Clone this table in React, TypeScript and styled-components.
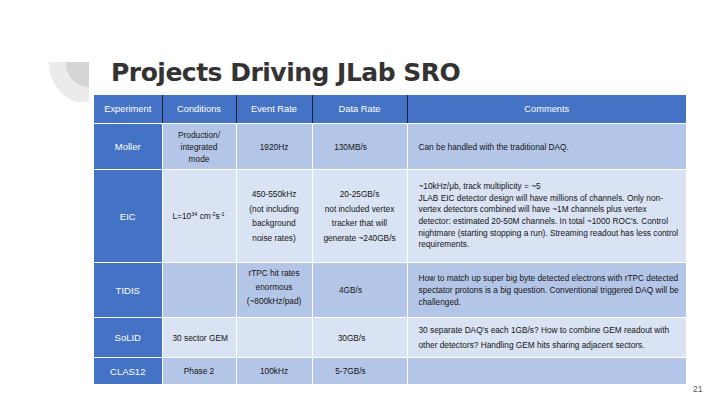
import {FC, ReactNode} from "react";
import styled, {createGlobalStyle} from "styled-components";

const GlobalStyle = createGlobalStyle`
  html, body {
    margin: 0;
    padding: 0;
    background: #fff;
  }
`

type Row = {
  name: string
  height: number
  shade: "mid" | "light"
  cells: {content: ReactNode, align?: "left" | "center", valign?: "top" | "middle", lh?: number, pl?: number, pr?: number, pt?: number}[]
}

// built lazily so the styled Sup below exists when the JSX is created
const buildRows = (): Row[] => [
  {
    name: "Moller",
    height: 46,
    shade: "mid",
    cells: [
      {content: <>Production/<br/>integrated<br/>mode</>, lh: 12},
      {content: "1920Hz"},
      {content: "130MB/s", pr: 22},
      {content: "Can be handled with the traditional DAQ.", align: "left", pl: 11},
    ],
  },
  {
    name: "EIC",
    height: 93,
    shade: "light",
    cells: [
      {content: <>L=10<Sup>34</Sup> cm<Sup>-2</Sup>s<Sup>-1</Sup></>, align: "left", pl: 10},
      {content: <>450-550kHz<br/>(not including<br/>background<br/>noise rates)</>, lh: 14.5},
      {content: <>20-25GB/s<br/>not included vertex<br/>tracker that will<br/>generate ~240GB/s</>, lh: 14.5},
      {
        content: <>~10kHz/μb, track multiplicity = ~5<br/>JLAB EIC detector design will have millions of channels. Only non-<br/>vertex detectors combined will have ~1M channels plus vertex<br/>detector: estimated 20-50M channels. In total ~1000 ROC's. Control<br/>nightmare (starting stopping a run). Streaming readout has less control<br/>requirements.</>,
        align: "left", pl: 11, lh: 11.7,
      },
    ],
  },
  {
    name: "TIDIS",
    height: 55,
    shade: "mid",
    cells: [
      {content: ""},
      {content: <>rTPC hit rates<br/>enormous<br/>(~800kHz/pad)</>, valign: "top", lh: 14, pt: 3},
      {content: "4GB/s", pr: 22},
      {
        content: <>How to match up super big byte detected electrons with rTPC detected<br/>spectator protons is a big question. Conventional triggered DAQ will be<br/>challenged.</>,
        align: "left", pl: 11, lh: 12,
      },
    ],
  },
  {
    name: "SoLID",
    height: 40,
    shade: "light",
    cells: [
      {content: "30 sector GEM", align: "left", pl: 10},
      {content: ""},
      {content: "30GB/s", pr: 20},
      {
        content: <>30 separate DAQ's each 1GB/s? How to combine GEM readout with<br/>other detectors? Handling GEM hits sharing adjacent sectors.</>,
        align: "left", pl: 11, lh: 14.5,
      },
    ],
  },
  {
    name: "CLAS12",
    height: 27,
    shade: "mid",
    cells: [
      {content: "Phase 2"},
      {content: "100kHz"},
      {content: "5-7GB/s", pr: 22},
      {content: ""},
    ],
  },
]

const headers = ["Experiment", "Conditions", "Event Rate", "Data Rate", "Comments"]
const widths = [68, 74, 76, 95, 279]

const CornerMark: FC = () => (
  <Mark width="40" height="40" viewBox="0 0 40 40">
    <circle cx="40" cy="2" r="40" fill="#ebebeb"/>
    <circle cx="40" cy="2" r="23" fill="#d5d5d5"/>
  </Mark>
)

const App: FC = () => {
  const rows = buildRows()

  return (
    <>
      <GlobalStyle/>
      <Slide>
        <Aside>
          <CornerMark/>
        </Aside>

        <Main>
          <Title>Projects Driving JLab SRO</Title>
          <Table>
            <colgroup>
              {widths.map((w, i) => <col key={i} style={{width: w}}/>)}
            </colgroup>
            <thead>
              <tr>
                {headers.map(h => <HeadCell key={h}>{h}</HeadCell>)}
              </tr>
            </thead>
            <tbody>
              {rows.map(r => (
                <BodyRow key={r.name} $h={r.height} $shade={r.shade}>
                  <NameCell>{r.name}</NameCell>
                  {r.cells.map((c, i) => (
                    <Cell
                      key={i}
                      $align={c.align ?? "center"}
                      $valign={c.valign ?? "middle"}
                      $lh={c.lh ?? 12}
                      $pl={c.pl ?? 4}
                      $pr={c.pr ?? 4}
                      $pt={c.pt ?? 0}
                    >
                      {c.content}
                    </Cell>
                  ))}
                </BodyRow>
              ))}
            </tbody>
          </Table>
        </Main>

        <PageNumber>21</PageNumber>
      </Slide>
    </>
  )
}

const Slide = styled.div`
  width: 720px;
  height: 405px;
  overflow: hidden;
  display: grid;
  grid-template-columns: 94px 592px 1fr;
  background: #fff;
  font-family: "Liberation Sans", Arial, sans-serif;
`
const Aside = styled.div`
  padding: 62px 0 0 49px;
`
const Mark = styled.svg`
  display: block;
`
const Main = styled.div`
  padding-top: 60px;
  display: flex;
  flex-direction: column;
`
const Title = styled.h1`
  margin: 0 0 0 17px;
  font-family: "DejaVu Sans", Verdana, sans-serif;
  font-weight: 700;
  font-size: 25px;
  line-height: 25px;
  letter-spacing: -0.5px;
  color: #333;
`
const Table = styled.table`
  margin-top: 10px;
  width: 592px;
  table-layout: fixed;
  border-collapse: collapse;
`
const HeadCell = styled.th`
  height: 28px;
  padding: 0;
  background: #4472c4;
  color: #fff;
  font-weight: 400;
  font-size: 9.3px;
  text-align: center;
  vertical-align: middle;
  border-right: 1px solid #1c2333;
  border-bottom: 1px solid #fff;

  &:last-child{
    border-right: 0;
  }
`
const BodyRow = styled.tr<{$h: number, $shade: "mid" | "light"}>`
  height: ${p => p.$h}px;
  background: ${p => p.$shade === "mid" ? "#b4c6e7" : "#dae3f3"};
`
const NameCell = styled.td`
  padding: 0;
  background: #4472c4;
  color: #fff;
  font-size: 9.5px;
  text-align: center;
  vertical-align: middle;
  border: 1px solid #fff;
  border-left: 0;
`
const Cell = styled.td<{$align: string, $valign: string, $lh: number, $pl: number, $pr: number, $pt: number}>`
  padding: ${p => p.$pt}px ${p => p.$pr}px 0 ${p => p.$pl}px;
  font-size: 8.3px;
  line-height: ${p => p.$lh}px;
  color: #141414;
  text-align: ${p => p.$align};
  vertical-align: ${p => p.$valign};
  border: 1px solid #fff;
  white-space: nowrap;

  &:last-child{
    border-right: 0;
  }
`
const Sup = styled.sup`
  font-size: 5.5px;
  line-height: 0;
  vertical-align: 3px;
`
const PageNumber = styled.div`
  align-self: end;
  padding: 0 0 11px 7px;
  font-size: 8.5px;
  color: #595959;
`

export default App
